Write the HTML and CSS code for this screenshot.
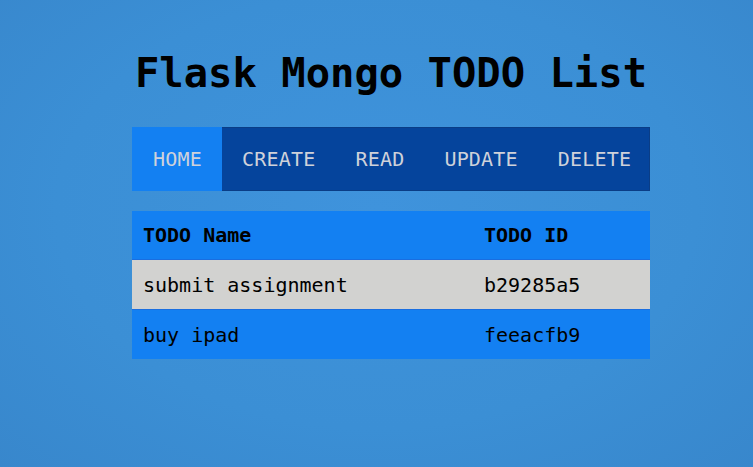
FILE: index.html
```html
<!DOCTYPE html>
<html>
<head>
<meta charset="utf-8">
<link rel="stylesheet" href="styles.css">
</head>
<body>
<div class="page">
  <h1 class="title">Flask Mongo TODO List</h1>
  <nav class="nav">
    <a class="nav-item active">HOME</a>
    <a class="nav-item">CREATE</a>
    <a class="nav-item">READ</a>
    <a class="nav-item">UPDATE</a>
    <a class="nav-item">DELETE</a>
  </nav>
  <table class="todos">
    <thead>
      <tr><th class="c1">TODO Name</th><th class="c2">TODO ID</th></tr>
    </thead>
    <tbody>
      <tr class="alt"><td class="c1">submit assignment</td><td class="c2">b29285a5</td></tr>
      <tr><td class="c1">buy ipad</td><td class="c2">feeacfb9</td></tr>
    </tbody>
  </table>
</div>
</body>
</html>
```
FILE: styles.css
```css
html, body {
  margin: 0;
  padding: 0;
  height: 100%;
}
body {
  background: radial-gradient(ellipse at 50% 45%, #3f93dc 0%, #3b8fd5 60%, #3887cc 100%);
  font-family: "DejaVu Sans Mono", "Liberation Mono", monospace;
  overflow: hidden;
}
.page {
  width: 518px;
  margin-left: 132px;
  padding-top: 49px;
}
.title {
  margin: 0 -10px;
  font-size: 40.5px;
  font-weight: bold;
  line-height: 48px;
  text-align: center;
  white-space: nowrap;
  color: #000;
}
.nav {
  margin-top: 30px;
  height: 64px;
  display: flex;
  background: #05449c;
  border: 1px solid #0a3d86;
  box-sizing: border-box;
}
.nav-item {
  display: flex;
  align-items: center;
  padding: 0 20px;
  font-size: 20px;
  letter-spacing: 0.2px;
  color: #cfd2da;
  text-decoration: none;
}
.nav-item.active {
  background: #1380f2;
  margin: -1px 0 -1px -1px;
  padding-left: 21px;
}
.todos {
  margin-top: 20px;
  width: 518px;
  border-collapse: collapse;
  background: #1380f2;
  font-size: 20px;
  color: #000;
}
.todos th, .todos td {
  text-align: left;
  padding: 0 11px;
}
.todos th {
  height: 48px;
  font-weight: bold;
}
.todos td {
  height: 49px;
  font-weight: normal;
}
.c1 { width: 319px; }
.todos tr.alt td {
  background: #d2d2d0;
  border-top: 1px solid #1a6ee0;
  border-bottom: 1px solid #1a6ee0;
}
```
